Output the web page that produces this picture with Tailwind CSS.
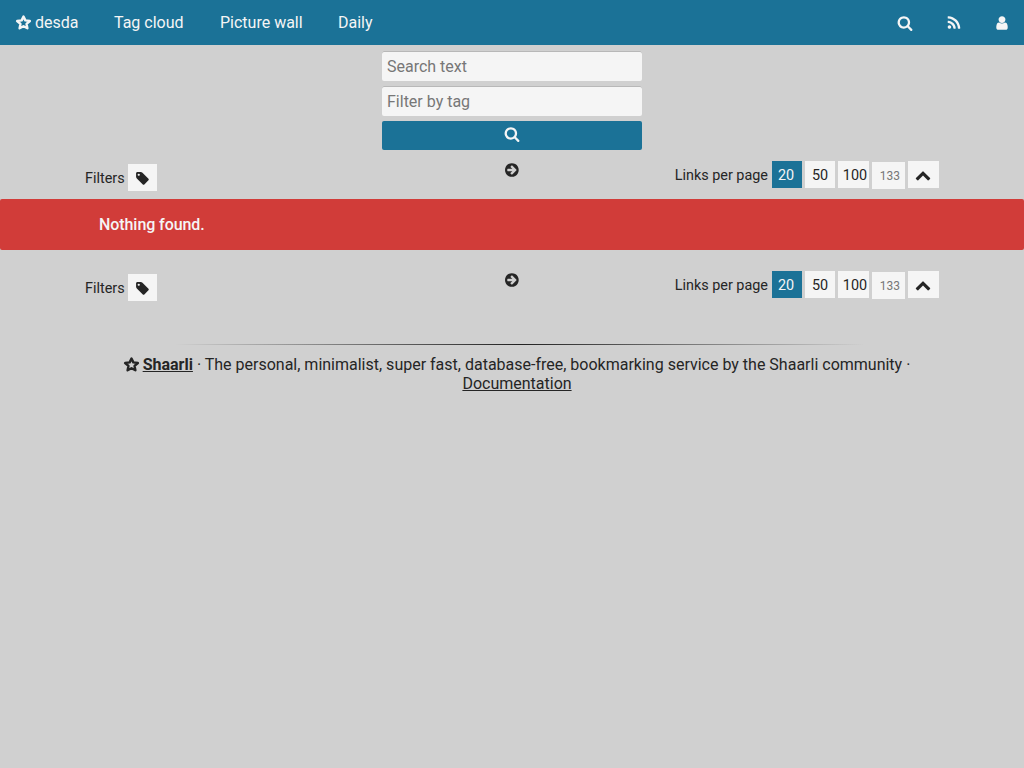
<!DOCTYPE html>
<html lang="en">
<head>
  <meta charset="UTF-8">
  <meta name="viewport" content="width=device-width, initial-scale=1.0">
  <title>Search - desda</title>
  <script src="https://cdn.jsdelivr.net/npm/@tailwindcss/browser@4"></script>
</head>
<body class="bg-[#d0d0d0] min-h-screen text-[#252525] font-['Roboto',sans-serif] text-base">
  <!-- Top menu -->
  <nav class="bg-[#1b7297] h-[45px] flex items-center justify-between text-[#f5f5f5]">
    <div class="flex items-center">
      <a class="flex items-center pl-[15px] w-[114px]">
        <svg class="w-[17px] h-[17px] mr-[3px]" viewBox="0 0 24 24" fill="none" stroke="currentColor" stroke-width="3.4" stroke-linejoin="round"><path d="M12 3.500L14.600 9 21 9.900 16.300 14 17.500 20.200 12 17.200 6.500 20.200 7.700 14 3 9.900 9.400 9z"/></svg>
        <span>desda</span>
      </a>
      <a class="w-[106px]">Tag cloud</a>
      <a class="w-[118px]">Picture wall</a>
      <a>Daily</a>
    </div>
    <div class="flex items-center">
      <svg class="w-[16px] h-[16px] mr-[33px]" viewBox="0 0 1792 1792" fill="currentColor"><path fill-rule="evenodd" d="M1216 832q0-185-131.500-316.500t-316.500-131.500-316.500 131.500-131.500 316.500 131.500 316.500 316.500 131.500 316.500-131.500 131.500-316.500zm512 832q0 52-38 90t-90 38q-54 0-90-38l-343-342q-179 124-399 124-143 0-273.500-55.500t-225-150-150-225-55.500-273.500 55.500-273.500 150-225 225-150 273.500-55.500 273.500 55.500 225 150 150 225 55.500 273.500q0 220-124 399l343 343q37 37 37 90z"/></svg>
      <svg class="w-[16px] h-[16px] mr-[32px]" viewBox="0 0 1792 1792" fill="currentColor"><path d="M576 1344q0 80-56 136t-136 56-136-56-56-136 56-136 136-56 136 56 56 136zm512 123q2 28-17 48-18 21-47 21h-135q-25 0-43-16.500t-20-41.500q-22-229-184.500-391.500t-391.500-184.500q-25-2-41.500-20t-16.500-43v-135q0-29 21-47 17-17 43-17h5q160 13 306 80.500t259 181.500q114 113 181.500 259t80.500 306zm512 2q2 27-18 47-18 20-46 20h-143q-26 0-44.500-17.500t-19.500-42.500q-12-215-101-408.500t-231.500-336-336-231.500-408.500-102q-25-1-42.500-19.500t-17.500-43.500v-143q0-28 20-46 18-18 44-18h3q262 13 501.500 120t425.500 294q187 186 294 425.500t120 501.500z"/></svg>
      <svg class="w-[16px] h-[16px] mr-[14px]" viewBox="0 0 1792 1792" fill="currentColor"><path d="M1536 1399q0 109-62.500 187t-150.500 78h-854q-88 0-150.500-78t-62.500-187q0-85 8.500-160.500t31.500-152 58.500-131 94-89 134.500-34.500q131 128 313 128t313-128q76 0 134.500 34.500t94 89 58.500 131 31.500 152 8.500 160.500zm-256-887q0 159-112.500 271.500t-271.500 112.500-271.500-112.500-112.500-271.500 112.500-271.500 271.500-112.500 271.500 112.500 112.500 271.500z"/></svg>
    </div>
  </nav>

  <!-- Search -->
  <form class="w-[260px] mx-auto pt-[6px] flex flex-col">
    <input type="text" placeholder="Search text" class="h-[30px] mb-[5px] px-[5px] bg-[#f5f5f5] rounded-[2px] shadow-[inset_0_1px_0_#b8b8b8] placeholder:text-[#777] outline-none">
    <input type="text" placeholder="Filter by tag" class="h-[30px] mb-[5px] px-[5px] bg-[#f5f5f5] rounded-[2px] shadow-[inset_0_1px_0_#b8b8b8] placeholder:text-[#777] outline-none">
    <button type="button" class="h-[29px] bg-[#1b7297] rounded-[2px] flex items-center justify-center text-[#f5f5f5]">
      <svg class="w-[16px] h-[16px] mb-[3px]" viewBox="0 0 1792 1792" fill="currentColor"><path fill-rule="evenodd" d="M1216 832q0-185-131.500-316.500t-316.500-131.500-316.500 131.500-131.500 316.500 131.500 316.500 316.500 131.500 316.500-131.500 131.500-316.500zm512 832q0 52-38 90t-90 38q-54 0-90-38l-343-342q-179 124-399 124-143 0-273.500-55.500t-225-150-150-225-55.500-273.500 55.500-273.500 150-225 225-150 273.500-55.500 273.500 55.500 225 150 150 225 55.500 273.500q0 220-124 399l343 343q37 37 37 90z"/></svg>
    </button>
  </form>

  <!-- Paging, top -->
  <div class="ml-[85px] w-[854px] h-[38px] mt-[11px] grid grid-cols-3 text-[14.4px]">
    <div class="flex items-start pt-[3px]">
      <span class="mr-[3px] leading-[30px]">Filters</span>
      <a class="w-[29px] h-[27px] pt-[1px] bg-[#f5f5f5] flex items-center justify-center">
        <svg class="w-[15px] h-[15px]" viewBox="0 0 1792 1792" fill="currentColor"><path fill-rule="evenodd" d="M576 448q0-53-37.500-90.500t-90.500-37.500-90.500 37.500-37.500 90.500 37.500 90.500 90.500 37.500 90.500-37.500 37.500-90.500zm1067 576q0 53-37 90l-491 492q-39 37-91 37-53 0-90-37l-715-716q-38-37-64.500-101t-26.500-117v-416q0-52 38-90t90-38h416q53 0 117 26.500t102 64.500l715 714q37 39 37 91z"/></svg>
      </a>
    </div>
    <div class="flex justify-center pt-[1px] pl-[2px]">
      <svg class="w-[16px] h-[16px]" viewBox="0 0 1792 1792" fill="currentColor"><path fill-rule="evenodd" d="M1285 897q0-27-18-45l-91-91-362-362q-18-18-45-18t-45 18l-91 91q-18 18-18 45t18 45l189 189h-502q-26 0-45 19t-19 45v128q0 26 19 45t45 19h502l-189 189q-19 19-19 45t19 45l91 91q18 18 45 18t45-18l362-362 91-91q18-18 18-45zm251-1q0 209-103 385.500t-279.500 279.500-385.500 103-385.500-103-279.500-279.500-103-385.500 103-385.500 279.500-279.500 385.500-103 385.500 103 279.500 279.500 103 385.500z"/></svg>
    </div>
    <div class="flex justify-end items-start">
      <span class="mr-[4px] leading-[29px]">Links per page</span>
      <a class="w-[30px] h-[27px] pt-[2px] pr-[2px] mr-[3px] bg-[#1b7297] text-[#f5f5f5] flex items-center justify-center">20</a>
      <a class="w-[30px] h-[27px] pt-[2px] mr-[3px] bg-[#f5f5f5] flex items-center justify-center">50</a>
      <a class="w-[31px] h-[27px] pt-[2px] pl-[3px] mr-[3px] bg-[#f5f5f5] flex items-center justify-center">100</a>
      <a class="w-[33px] h-[27px] mt-[1px] pt-[1px] pl-[3px] mr-[3px] bg-[#f5f5f5] text-[#777] text-[12px] flex items-center justify-center">133</a>
      <a class="w-[31px] h-[27px] bg-[#f5f5f5] flex items-center justify-center">
        <svg class="w-[16px] h-[16px]" viewBox="0 0 1792 1792" fill="currentColor"><path d="M1683 1331l-166 165q-19 19-45 19t-45-19l-531-531-531 531q-19 19-45 19t-45-19l-166-165q-19-19-19-45.500t19-45.500l742-741q19-19 45-19t45 19l742 741q19 19 19 45.500t-19 45.500z"/></svg>
      </a>
    </div>
  </div>

  <!-- Notice -->
  <div class="h-[51px] pl-[99px] bg-[#d13c39] rounded-[2px] text-[#f5f5f5] font-medium tracking-[-0.07px] flex items-center">Nothing found.</div>

  <!-- Paging, bottom -->
  <div class="ml-[85px] w-[854px] h-[38px] mt-[21px] grid grid-cols-3 text-[14.4px]">
    <div class="flex items-start pt-[3px]">
      <span class="mr-[3px] leading-[30px]">Filters</span>
      <a class="w-[29px] h-[27px] pt-[1px] bg-[#f5f5f5] flex items-center justify-center">
        <svg class="w-[15px] h-[15px]" viewBox="0 0 1792 1792" fill="currentColor"><path fill-rule="evenodd" d="M576 448q0-53-37.500-90.500t-90.500-37.500-90.500 37.500-37.500 90.500 37.500 90.500 90.500 37.500 90.500-37.500 37.500-90.500zm1067 576q0 53-37 90l-491 492q-39 37-91 37-53 0-90-37l-715-716q-38-37-64.500-101t-26.500-117v-416q0-52 38-90t90-38h416q53 0 117 26.500t102 64.500l715 714q37 39 37 91z"/></svg>
      </a>
    </div>
    <div class="flex justify-center pt-[1px] pl-[2px]">
      <svg class="w-[16px] h-[16px]" viewBox="0 0 1792 1792" fill="currentColor"><path fill-rule="evenodd" d="M1285 897q0-27-18-45l-91-91-362-362q-18-18-45-18t-45 18l-91 91q-18 18-18 45t18 45l189 189h-502q-26 0-45 19t-19 45v128q0 26 19 45t45 19h502l-189 189q-19 19-19 45t19 45l91 91q18 18 45 18t45-18l362-362 91-91q18-18 18-45zm251-1q0 209-103 385.500t-279.500 279.500-385.500 103-385.500-103-279.500-279.500-103-385.500 103-385.500 279.500-279.500 385.500-103 385.500 103 279.500 279.500 103 385.500z"/></svg>
    </div>
    <div class="flex justify-end items-start">
      <span class="mr-[4px] leading-[29px]">Links per page</span>
      <a class="w-[30px] h-[27px] pt-[2px] pr-[2px] mr-[3px] bg-[#1b7297] text-[#f5f5f5] flex items-center justify-center">20</a>
      <a class="w-[30px] h-[27px] pt-[2px] mr-[3px] bg-[#f5f5f5] flex items-center justify-center">50</a>
      <a class="w-[31px] h-[27px] pt-[2px] pl-[3px] mr-[3px] bg-[#f5f5f5] flex items-center justify-center">100</a>
      <a class="w-[33px] h-[27px] mt-[1px] pt-[1px] pl-[3px] mr-[3px] bg-[#f5f5f5] text-[#777] text-[12px] flex items-center justify-center">133</a>
      <a class="w-[31px] h-[27px] bg-[#f5f5f5] flex items-center justify-center">
        <svg class="w-[16px] h-[16px]" viewBox="0 0 1792 1792" fill="currentColor"><path d="M1683 1331l-166 165q-19 19-45 19t-45-19l-531-531-531 531q-19 19-45 19t-45-19l-166-165q-19-19-19-45.500t19-45.500l742-741q19-19 45-19t45 19l742 741q19 19 19 45.500t-19 45.500z"/></svg>
      </a>
    </div>
  </div>

  <!-- Footer -->
  <div class="mt-[35px] ml-[175px] w-[690px] h-px bg-gradient-to-r from-transparent via-[#222] to-transparent"></div>
  <footer class="mt-[10px] ml-[10px] text-center leading-[19px]">
    <svg class="inline w-[17px] h-[17px] ml-[-1px] mr-[-1px] align-[-3px]" viewBox="0 0 24 24" fill="none" stroke="currentColor" stroke-width="3.4" stroke-linejoin="round"><path d="M12 3.500L14.600 9 21 9.900 16.300 14 17.500 20.200 12 17.200 6.500 20.200 7.700 14 3 9.900 9.400 9z"/></svg>
    <a class="font-bold underline">Shaarli</a> · The personal, minimalist, super fast, database-free, bookmarking service by the Shaarli community ·<br>
    <a class="underline">Documentation</a>
  </footer>
</body>
</html>
